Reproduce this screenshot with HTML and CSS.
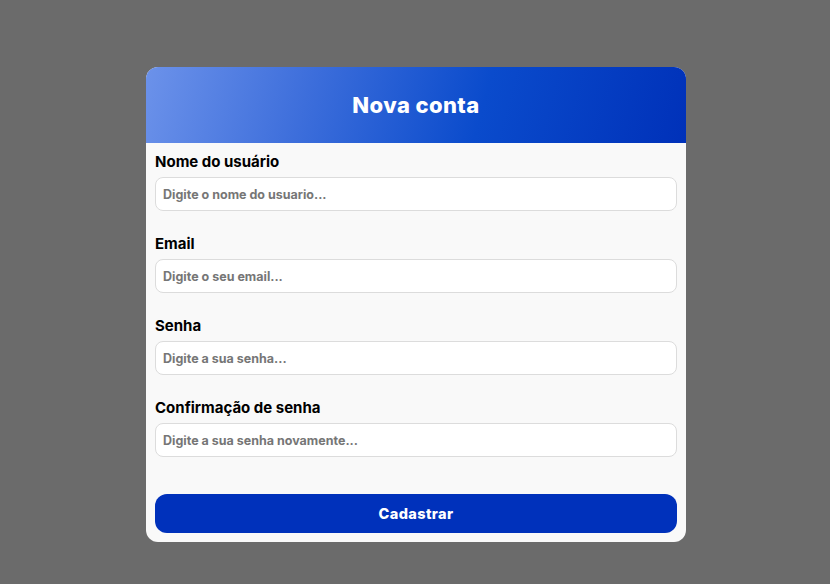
FILE: index.html
```html
<!DOCTYPE html>
<html lang="pt-BR">
<head>
<meta charset="utf-8">
<title>Nova conta</title>
<link rel="stylesheet" href="styles.css">
</head>
<body>
<main class="card">
  <header class="card-header">
    <h1 class="title">Nova conta</h1>
  </header>
  <form class="form">
    <div class="field">
      <label class="label">Nome do usuário</label>
      <input class="input" type="text" placeholder="Digite o nome do usuario...">
    </div>
    <div class="field">
      <label class="label">Email</label>
      <input class="input" type="email" placeholder="Digite o seu email...">
    </div>
    <div class="field">
      <label class="label">Senha</label>
      <input class="input" type="password" placeholder="Digite a sua senha...">
    </div>
    <div class="field">
      <label class="label">Confirmação de senha</label>
      <input class="input" type="password" placeholder="Digite a sua senha novamente...">
    </div>
    <button class="submit" type="button">Cadastrar</button>
  </form>
</main>
</body>
</html>
```
FILE: styles.css
```css
* { box-sizing: border-box; }
html, body { margin: 0; padding: 0; }
body {
  background: #6b6b6b;
  font-family: Inter, "Noto Sans", sans-serif;
  width: 830px;
  height: 584px;
  overflow: hidden;
  padding-top: 67px;
}
.card {
  width: 540px;
  margin: 0 auto 0 146px;
  background: #f9f9f9;
  border-radius: 12px;
  overflow: hidden;
}
.card-header {
  height: 76px;
  display: flex;
  align-items: center;
  justify-content: center;
  background: linear-gradient(105deg, #6c92ea 0%, #3d6edb 30%, #0a4bcc 62%, #0031b9 100%);
}
.title {
  margin: 0;
  color: #fff;
  font-size: 22px;
  font-weight: 800;
  letter-spacing: 0.4px;
}
.form {
  display: flex;
  flex-direction: column;
  padding: 7px 9px 9px;
}
.field {
  display: flex;
  flex-direction: column;
  gap: 4px;
  margin-bottom: 21px;
}
.label {
  font-size: 15px;
  line-height: 23px;
  font-weight: 700;
  color: #000;
}
.input {
  height: 34px;
  border: 1px solid #dcdcdc;
  border-radius: 8px;
  background: #fff;
  padding: 0 7px;
  font-family: inherit;
  font-size: 12.5px;
  font-weight: 700;
  outline: none;
}
.input::placeholder { color: #767676; }
.submit {
  margin-top: 16px;
  height: 39px;
  border: none;
  border-radius: 12px;
  background: #0031bb;
  color: #fff;
  font-family: inherit;
  font-size: 14.5px;
  font-weight: 800;
  letter-spacing: 0.4px;
}
```
